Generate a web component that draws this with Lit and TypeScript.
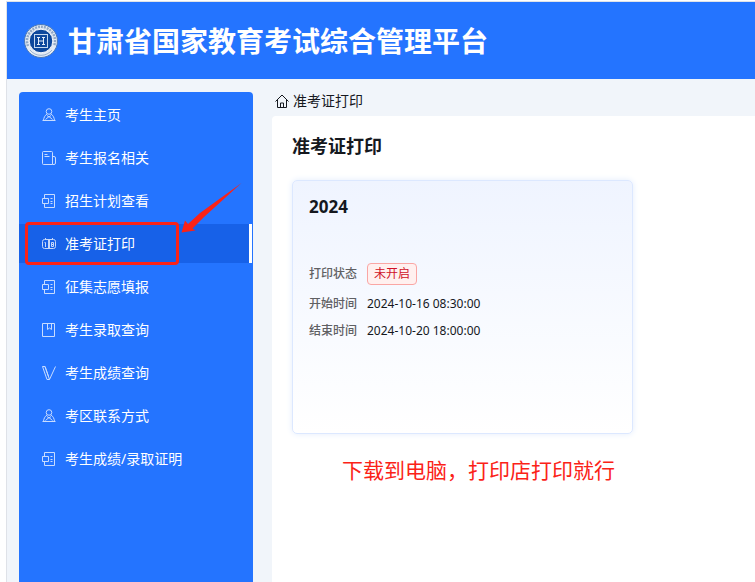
import { LitElement, html, svg, css } from "lit";
import { customElement, property, state } from "lit/decorators.js";
import { classMap } from "lit/directives/class-map.js";

const ICONS: Record<string, unknown> = {
  user: svg`<circle cx="7" cy="3.500" r="2.800"/><path d="M5 6C2.800 7.500 1.800 9.500 1.500 12.500M9 6c2.200 1.500 3.200 3.500 3.500 6.500M.5 12.500h13M3.500 11.500L7 8.500l3.500 3M5 7.500l2 1.500 2-1.500"/>`,
  paper: svg`<path d="M1.500.5h8q1 0 1 1v12h-9q-1 0-1-1v-11q0-1 1-1zM10.500 5.500h1.500q1.500 0 1.500 1.500v5q0 1.500-1.500 1.500h-1.500M2.500 3.500h3M2.500 5.500h5"/>`,
  plan: svg`<path d="M2.500 4V.5h10v13h-10V10M.5 4.500h6v5h-6zM8.500 4.500h2M8.500 7.500h2M8.500 9.500h2"/>`,
  ticket: svg`<rect x=".5" y="2.500" width="13" height="9" rx="2"/><path d="M3.500 1v2M10.500 1v2M6.500 2v10M7.500 2v10M2.500 5.500h1v4.500M9.500 5.500h2v4h-2zM9.500 7.500h2"/>`,
  book: svg`<path d="M.5.5h12v13H.5zM5.500.5v6l2-1.500 2 1.500v-6"/>`,
  score: svg`<path d="M.5.5h2.500l4.500 13H5zM3 .5l3.500 10M7.500 13.500L13.500.5"/>`,
};

@customElement("menu-icon")
class MenuIcon extends LitElement {
  @property() name = "plan";
  static styles = css`
    :host { display: block; flex: none; width: 14px; height: 14px; opacity: 0.75; }
    svg { display: block; width: 100%; height: 100%; fill: none; stroke: currentColor; stroke-width: 1; }
  `;
  render() {
    return html`<svg viewBox="0 0 14 14" aria-hidden="true">${ICONS[this.name]}</svg>`;
  }
}

@customElement("site-logo")
class SiteLogo extends LitElement {
  static styles = css`
    :host { display: block; flex: none; width: 34px; height: 34px; }
    svg { display: block; width: 100%; height: 100%; }
  `;
  render() {
    return html`<svg viewBox="0 0 34 34" fill="none" aria-hidden="true">
      <circle cx="17" cy="17" r="16.500" fill="#e3ebf5" stroke="#4a78b8"/>
      <path d="M4 22A14 14 0 1 1 30 22" stroke="#6f8db4" stroke-width="2.500" stroke-dasharray="2 1" opacity=".7"/>
      <path d="M6 26A14 14 0 0 0 28 26" stroke="#8ba5c6" stroke-width="1" opacity=".8"/>
      <circle cx="17" cy="17" r="11.800" fill="#0e489c" stroke="#f5f8fc"/>
      <rect x="10.500" y="10.500" width="13" height="13" stroke="#c6d9ef"/>
      <path d="M13 13.500h3M18 13.500h3M13 20.500h3M18 20.500h3M14.500 13.500v7M19.500 13.500v7M14.500 17h5" stroke="#e6eef8"/>
    </svg>`;
  }
}

@customElement("app-root")
class AppRoot extends LitElement {
  @state() private current = 3;

  private menu = [
    { icon: "user", label: "考生主页" },
    { icon: "paper", label: "考生报名相关" },
    { icon: "plan", label: "招生计划查看" },
    { icon: "ticket", label: "准考证打印" },
    { icon: "plan", label: "征集志愿填报" },
    { icon: "book", label: "考生录取查询" },
    { icon: "score", label: "考生成绩查询" },
    { icon: "user", label: "考区联系方式" },
    { icon: "plan", label: "考生成绩/录取证明" },
  ];

  static styles = css`
    :host {
      display: block;
      box-sizing: border-box;
      min-height: 100vh;
      padding: 1px 0 0 6px;
      background: #fff;
      color: #15181e;
      font: 14px/20px "Noto Sans", "Noto Sans CJK SC", sans-serif;
    }
    *, *::before { box-sizing: border-box; }
    .page {
      display: flex;
      flex-direction: column;
      min-height: calc(100vh - 1px);
      border: solid #dfe2e8;
      border-width: 1px 0 0 1px;
      background: #f1f5fa;
    }
    header {
      display: flex;
      align-items: center;
      gap: 10px;
      min-height: 77px;
      padding: 0 17px;
      background: #2474ff;
      color: #fff;
    }
    h1, h2, h3, p, ul, dl, dd { margin: 0; padding: 0; }
    h1 { font-size: 28px; line-height: 40px; font-weight: 700; }
    .body { display: flex; flex: 1; gap: 19px; padding: 13px 0 0 12px; }
    nav {
      flex: none;
      width: 234px;
      padding-top: 3px;
      border-radius: 4px 4px 0 0;
      background: #2474ff;
    }
    ul { display: flex; flex-direction: column; gap: 4px; list-style: none; }
    li { position: relative; }
    .item {
      display: flex;
      align-items: center;
      gap: 9px;
      height: 39px;
      padding: 0 23px;
      border-right: 3px solid transparent;
      margin-right: 1px;
      color: #fff;
      text-decoration: none;
    }
    .active { background: #1761e8; border-right-color: #fff; }
    .frame {
      position: absolute;
      inset: -2px 74px -2px 6px;
      border: 3px solid #fb2217;
      border-radius: 4px;
      pointer-events: none;
    }
    .arrow {
      position: absolute;
      right: 11px;
      bottom: 28px;
      width: 62px;
      height: 52px;
      pointer-events: none;
    }
    main { display: flex; flex: 1; flex-direction: column; min-width: 0; }
    .crumb {
      display: flex;
      align-items: center;
      gap: 4px;
      height: 24px;
      padding: 0 3px 6px;
    }
    .home { width: 14px; height: 14px; fill: none; stroke: currentColor; }
    .panel {
      flex: 1;
      padding: 16px 20px;
      border-top-left-radius: 4px;
      background: #fff;
    }
    h2 { font-size: 18px; line-height: 28px; }
    .card {
      width: 341px;
      max-width: 100%;
      min-height: 254px;
      margin-top: 20px;
      padding: 14px 16px;
      border: 1px solid #dce8ff;
      border-radius: 5px;
      background: linear-gradient(#eff4ff, #fff);
      box-shadow: 0 0 6px #e3edfc;
    }
    h3 { font-size: 17px; line-height: 24px; }
    dl {
      display: grid;
      grid-template-columns: 48px 1fr;
      grid-template-rows: 26px;
      gap: 7px 10px;
      align-items: center;
      margin-top: 42px;
      font-size: 12px;
    }
    dt { color: #5f6063; font-weight: 500; }
    .tag {
      display: inline-block;
      padding: 0 6px;
      border: 1px solid #faa6a4;
      border-radius: 4px;
      background: #fff0ef;
      color: #cf1127;
      line-height: 20px;
      vertical-align: top;
    }
    .note { margin: 20px 0 0 50px; color: #fb2217; font-size: 21px; line-height: 32px; }
  `;

  private pick(e: Event, i: number) {
    e.preventDefault();
    this.current = i;
  }

  render() {
    return html`
      <div class="page">
        <header>
          <site-logo></site-logo>
          <h1>甘肃省国家教育考试综合管理平台</h1>
        </header>
        <div class="body">
          <nav>
            <ul>
              ${this.menu.map((m, i) => html`<li>
                <a href="#" class=${classMap({ item: true, active: i === this.current })}
                  @click=${(e: Event) => this.pick(e, i)}>
                  <menu-icon name=${m.icon}></menu-icon>${m.label}
                </a>
                ${i === 3 ? html`
                  <span class="frame"></span>
                  <svg class="arrow" viewBox="0 0 62 52" aria-hidden="true">
                    <path fill="#fb2217" d="M61.500 0L24 34 12.500 45.500 15.500 47.500 1.500 49.500 5 37.500 8 41 20 30z"/>
                  </svg>` : ""}
              </li>`)}
            </ul>
          </nav>
          <main>
            <div class="crumb">
              <svg class="home" viewBox="0 0 14 14" aria-hidden="true">
                <path d="M.5 7.500L7 1l6.500 6.500M2.500 6v7.500h9V6M5.500 13.500V9h3v4.500"/>
              </svg>
              <span>准考证打印</span>
            </div>
            <section class="panel">
              <h2>准考证打印</h2>
              <article class="card">
                <h3>2024</h3>
                <dl>
                  <dt>打印状态</dt><dd><span class="tag">未开启</span></dd>
                  <dt>开始时间</dt><dd>2024-10-16 08:30:00</dd>
                  <dt>结束时间</dt><dd>2024-10-20 18:00:00</dd>
                </dl>
              </article>
              <p class="note">下载到电脑，打印店打印就行</p>
            </section>
          </main>
        </div>
      </div>
    `;
  }
}
